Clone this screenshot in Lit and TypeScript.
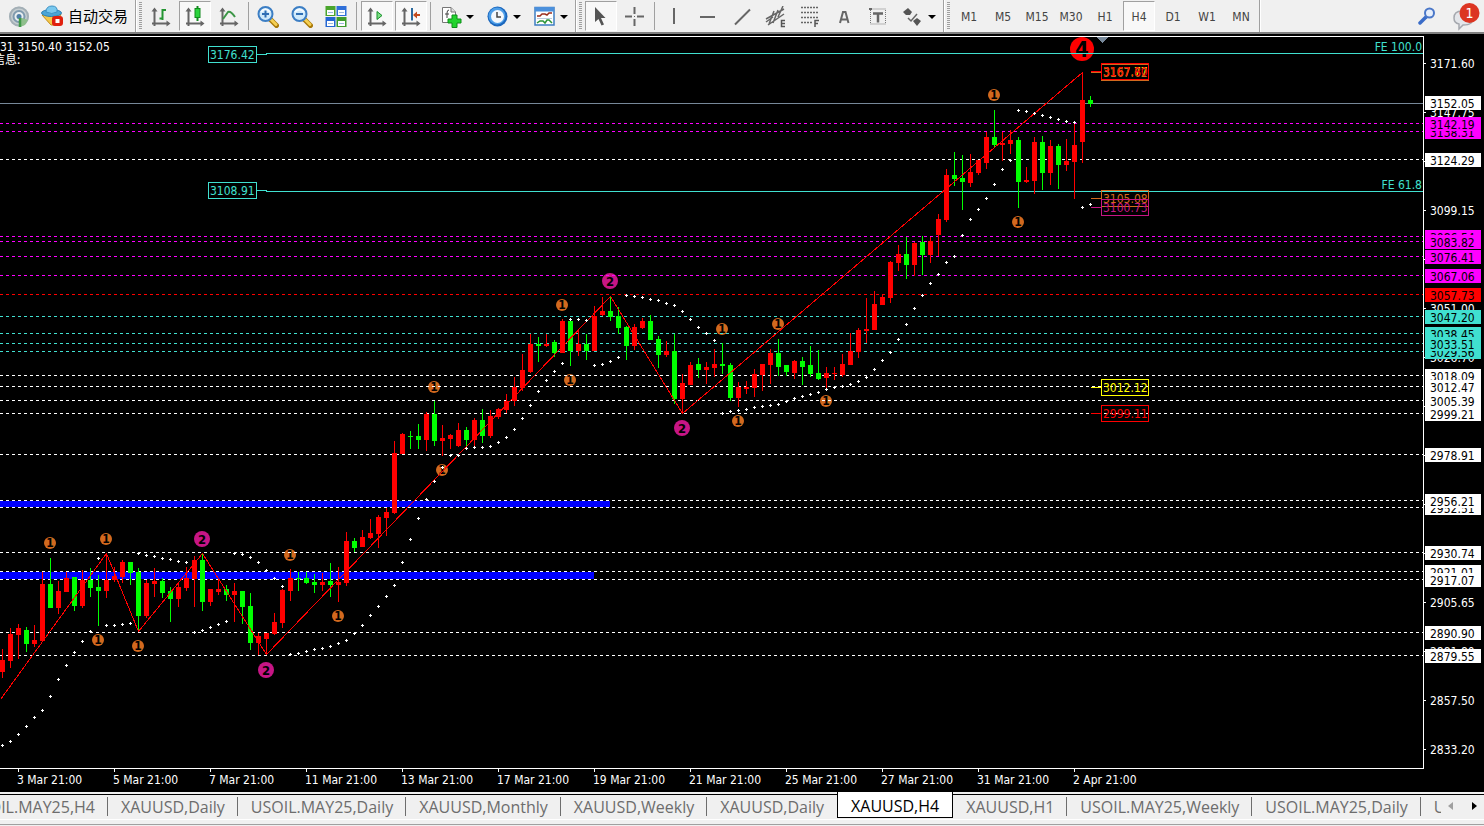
import { LitElement, html, svg, css } from "lit";
import { customElement, state } from "lit/decorators.js";

const RED = "#ff0000";
const LIME = "#00ff00";
const WHITE = "#ffffff";
const MAGENTA = "#ff00ff";
const TURQUOISE = "#40e0d0";
const CHOCOLATE = "#d2691e";
const VIOLET = "#c71585";
const SLATE = "#778899";

/** Distance between two bars and the centre of the first one. */
const STEP = 8;
const FIRST = 2;
/** Vertical origin of the plot's coordinates. */
const TOP = 37;

/** high, body top, body bottom, low, 1 = rising */
const BARS: number[][] = [
  [649,660,672,678,1],[628,634,661,668,1],[624,628,635,659,1],[627,630,644,652,0],[625,640,644,647,1],
  [572,584,641,642,1],[558,584,608,608,0],[581,591,608,614,1],[572,578,592,592,1],[577,577,606,611,0],
  [570,580,606,608,1],[568,580,588,597,0],[575,587,591,626,0],[553,580,591,598,1],[567,576,580,582,1],
  [560,562,577,583,1],[562,562,573,585,0],[568,572,616,631,0],[580,583,616,618,1],[568,581,584,597,1],
  [578,581,593,598,0],[587,591,599,622,0],[584,587,599,607,1],[567,578,588,591,1],[556,560,579,607,1],
  [553,560,602,611,0],[589,589,602,606,1],[579,589,592,595,1],[585,589,595,601,0],[583,591,595,622,1],
  [591,591,607,624,0],[593,606,643,650,0],[633,636,643,655,1],[633,633,639,655,1],[613,622,634,635,1],
  [589,590,623,628,1],[569,578,591,601,1],[572,578,579,591,0],[572,578,583,584,0],[574,582,585,593,0],
  [573,582,585,591,1],[563,581,585,597,0],[567,582,585,602,1],[532,541,583,586,1],[538,541,548,552,0],
  [530,537,547,547,1],[519,533,538,539,1],[515,517,534,548,1],[508,512,518,536,1],[441,453,513,514,1],
  [433,434,454,454,1],[431,436,437,449,0],[424,436,440,449,0],[412,414,440,451,1],[401,414,441,446,0],
  [425,438,441,456,1],[434,435,439,449,1],[423,430,446,447,1],[427,430,440,449,0],[418,420,440,446,1],
  [409,420,436,443,0],[410,416,436,438,1],[408,409,417,419,1],[394,401,410,413,1],[377,387,401,406,1],
  [354,370,388,391,1],[334,344,372,373,1],[337,344,346,362,0],[334,344,346,347,1],[340,342,353,357,0],
  [319,321,353,353,1],[320,321,351,366,0],[329,344,351,356,1],[334,344,351,360,0],[306,316,351,351,1],
  [297,311,315,316,1],[296,311,317,321,0],[307,316,328,334,0],[326,327,346,360,0],[324,327,346,350,1],
  [318,321,328,329,1],[315,321,340,340,0],[336,339,355,368,0],[341,351,355,357,1],[334,351,399,404,0],
  [374,383,399,414,1],[362,365,385,385,1],[358,364,370,378,0],[362,367,370,384,1],[349,364,368,377,1],
  [343,364,366,374,0],[363,365,398,401,0],[382,387,398,407,1],[381,387,389,394,1],[369,374,388,397,1],
  [364,364,375,391,1],[349,353,365,384,1],[339,353,367,376,0],[365,365,372,376,0],[360,361,373,379,1],
  [357,361,367,385,0],[346,365,374,377,0],[350,373,379,380,0],[367,373,378,388,1],[367,373,374,380,1],
  [354,364,375,377,1],[333,351,365,365,1],[328,330,352,358,1],[298,329,331,343,1],[291,304,330,330,1],
  [294,297,305,305,1],[261,262,298,303,1],[245,254,263,271,1],[237,254,265,279,0],[242,243,265,276,1],
  [236,242,255,275,0],[237,241,255,263,1],[214,219,235,256,1],[169,175,220,222,1],[152,175,179,186,0],
  [155,178,182,210,0],[154,172,183,187,1],[160,160,173,175,1],[132,137,163,169,1],[110,137,145,147,0],
  [132,143,145,161,1],[130,140,144,154,1],[137,140,182,208,0],[167,180,182,183,1],[137,142,181,194,1],
  [136,142,173,190,0],[140,146,173,185,1],[144,146,165,189,0],[139,161,165,171,1],[123,145,162,199,1],
  [72,100,142,163,1],[96,100,104,107,0],
];

/** Parabolic SAR, one value per bar. */
const SAR = [
  745,741,734,726,717,710,696,679,665,652,641,631,558,625,625,624,623,553,555,556,558,559,561,562,632,630,627,
  624,621,553,554,557,562,570,578,586,654,653,651,649,648,646,643,640,633,625,615,606,596,585,562,539,518,499,
  481,467,455,455,448,447,447,446,442,437,429,418,405,391,380,371,363,319,319,320,365,364,361,357,295,296,297,
  299,300,303,305,311,319,327,333,340,413,411,410,409,407,406,405,404,401,398,396,394,392,389,387,386,384,381,
  377,369,360,352,339,324,308,295,283,274,262,256,235,219,209,198,184,169,160,110,111,113,115,117,119,121,122,
  207,204,
];

const ZIGZAG = "0,699 106,553 138,631 202,553 266,654 610,296 682,413 1082,72";

const LEVELS: [number, string, string][] = [
  [131, "3138.31", MAGENTA], [123, "3142.19", MAGENTA], [159, "3124.29", WHITE],
  [236, "3086.54", MAGENTA], [241, "3083.82", MAGENTA], [256, "3076.41", MAGENTA], [275, "3067.06", MAGENTA],
  [294, "3057.73", RED], [316, "3047.20", TURQUOISE], [333, "3038.45", TURQUOISE],
  [351, "3029.56", TURQUOISE], [343, "3033.51", TURQUOISE],
  [375, "3018.09", WHITE], [386, "3012.47", WHITE], [400, "3005.39", WHITE], [413, "2999.21", WHITE],
  [454, "2978.91", WHITE], [507, "2952.51", WHITE], [500, "2956.21", WHITE], [552, "2930.74", WHITE],
  [571, "2921.01", WHITE], [579, "2917.07", WHITE], [632, "2890.90", WHITE], [655, "2879.55", WHITE],
];

const SCALE: [number, string][] = [
  [63, "3171.60"], [112, "3147.75"], [161, ""], [210, "3099.15"], [259, ""], [308, "3051.00"],
  [357, "3026.70"], [406, ""], [455, ""], [504, ""], [553, ""], [602, "2905.65"], [651, "2881.80"],
  [700, "2857.50"], [749, "2833.20"],
];

const ONES = [
  [50,543],[106,539],[98,640],[138,646],[290,555],[338,616],[434,387],[442,470],[562,305],[570,380],
  [722,329],[738,421],[778,324],[826,401],[994,95],[1018,222],
];
const TWOS = [[202,539],[266,670],[610,281],[682,428]];

const TIMES = [
  "3 Mar 21:00", "5 Mar 21:00", "7 Mar 21:00", "11 Mar 21:00", "13 Mar 21:00", "17 Mar 21:00",
  "19 Mar 21:00", "21 Mar 21:00", "25 Mar 21:00", "27 Mar 21:00", "31 Mar 21:00", "2 Apr 21:00",
];

const TAGS: [number, string, string][] = [
  [71, "3167.77", "#ffff00"], [72, "3167.62", CHOCOLATE], [71, "3167.80", RED],
  [198, "3105.08", CHOCOLATE], [207, "3100.73", VIOLET], [387, "3012.12", "#ffff00"], [413, "2999.11", RED],
];

const TABS = [
  "USOIL.MAY25,H4", "XAUUSD,Daily", "USOIL.MAY25,Daily", "XAUUSD,Monthly", "XAUUSD,Weekly", "XAUUSD,Daily",
  "XAUUSD,H4", "XAUUSD,H1", "USOIL.MAY25,Weekly", "USOIL.MAY25,Daily", "USOIL.MAY25,H1",
];

const FRAMES = ["M1", "M5", "M15", "M30", "H1", "H4", "D1", "W1", "MN"];

const axes = svg`<path d="M4.5 3V20M2 17.500H18.500" fill="none" stroke="#666" stroke-width="2"/>
  <path d="M1.500 5.500L4.500 1.500L7.500 5.500ZM16.500 14.500L20.500 17.500L16.500 20.500Z" fill="#666"/>`;

const lens = (sign: unknown) => svg`
  <path d="M13.500 13.500L19.500 19.500" stroke="#a87808" stroke-width="5" stroke-linecap="round"/>
  <path d="M13.500 13L19 18.500" stroke="#f5cf52" stroke-width="3" stroke-linecap="round"/>
  <circle cx="8.500" cy="8" r="7" fill="#cfeafb" stroke="#3c7ec4" stroke-width="2"/>
  <path d="M4 6Q8 1 13 6" fill="none" stroke="#fff" stroke-width="2" opacity=".8"/>${sign}`;

const ICONS: Record<string, unknown> = {
  signal: svg`<circle cx="11" cy="10.500" r="10" fill="#c5cdd0"/><circle cx="11" cy="10.500" r="9" fill="none" stroke="#a3afb6" stroke-width="2"/>
    <circle cx="11" cy="10.500" r="5.500" fill="#e8edf0" stroke="#7f9aae" stroke-width="2"/>
    <path d="M11 11L12 21L17 19L20 14Z" fill="#8fbf8c"/>
    <circle cx="11" cy="10.500" r="2.500" fill="#4f7fa6"/><path d="M12 12V21" stroke="#3f9a48" stroke-width="2.500"/>`,
  expert: svg`<path d="M1 10L10 20H15L20 9Z" fill="#f4c84a" stroke="#c28d1c"/>
    <ellipse cx="10.500" cy="8" rx="10" ry="3.500" fill="#4aa5d6" stroke="#2b7eb0"/>
    <path d="M5 7Q5 1 11 1T16 7Q11 10 5 7Z" fill="#79c8ee" stroke="#3b91c4"/>
    <rect x="11" y="11" width="11" height="10" rx="3" fill="#e0200e"/><rect x="14.500" y="14" width="4" height="4" fill="#fff"/>`,
  bars: svg`${axes}<path d="M12.500 3V14M12.500 4H16M9.500 12.500H12" stroke="#259533" stroke-width="2" fill="none"/>`,
  candles: svg`${axes}<path d="M13.500 0V15" stroke="#128a1e" stroke-width="2"/><rect x="11" y="2.500" width="5" height="9" fill="#2ad33c" stroke="#128a1e"/>`,
  line: svg`${axes}<path d="M5 13L10 6Q13 5 17 11" fill="none" stroke="#3c9646" stroke-width="2"/>`,
  zoomIn: lens(svg`<path d="M8.500 4.500V11.500M5 8H12" stroke="#2f6eb4" stroke-width="2"/>`),
  zoomOut: lens(svg`<path d="M5 8H12" stroke="#2f6eb4" stroke-width="2"/>`),
  tile: svg`<path d="M0.500 0H10.500V10H0.500Z" fill="#4aa52c"/><path d="M11.500 0H21.500V10H11.500Z" fill="#2f6fd8"/>
    <path d="M0.500 11H10.500V21H0.500Z" fill="#2466d2"/><path d="M11.500 11H21.500V21H11.500Z" fill="#3f9c2c"/>
    <path d="M2 4H9V9H2ZM13 4H20V9H13ZM2 15H9V20H2ZM13 15H20V20H13Z" fill="#fff"/>
    <path d="M3 6.500H8M14 6.500H19M3 17.500H8M14 17.500H19" stroke="#9db8dc"/>`,
  scroll: svg`${axes}<path d="M11 5.500L16 9.500L11 13.500Z" fill="#7be083" stroke="#17902a"/>`,
  shift: svg`${axes}<path d="M12 2V14.500" stroke="#2c6a9e" stroke-width="2"/><path d="M14 9H20" stroke="#c34a1c" stroke-width="2"/><path d="M13 9L17 5.500V12.500Z" fill="#c34a1c"/>`,
  indicator: svg`<path d="M2.500 1.500H11L15.500 6V16.500H2.500Z" fill="#fff" stroke="#777"/><path d="M11 1.500V6H15.500" fill="#ddd" stroke="#777"/>
    <path d="M9 4Q7 4 7 7V12M5 8H9" fill="none" stroke="#444"/>
    <path d="M12 9H17V13H21V17H17V21.500H12V17H8V13H12Z" fill="#22d32e" stroke="#0d8d18"/>`,
  clock: svg`<circle cx="10.500" cy="10.500" r="10" fill="#1b67bd"/><circle cx="10" cy="10" r="8.500" fill="#4d9ee8"/><circle cx="10.500" cy="10.500" r="6.500" fill="#f4f8fc"/>
    <path d="M10 6V11H14" fill="none" stroke="#444" stroke-width="1.500"/>`,
  template: svg`<rect x="1" y="1.500" width="19" height="17.500" fill="#fff" stroke="#3e7dc2" stroke-width="1.500"/><rect x="1" y="1" width="19" height="4.500" fill="#4b90dc"/>
    <path d="M3 10H6L8 8H11L13 9L15 7H18" fill="none" stroke="#9b2d1c" stroke-width="1.500"/><path d="M3 12.500H18" stroke="#bcd"/>
    <path d="M3 17L6 15H9L11 17L13 14L15 14L18 17" fill="none" stroke="#2c9437" stroke-width="1.500"/>`,
  cursor: svg`<path d="M5 1V16L8.500 13L11.500 19.500L14 18.500L11 12H15.500Z" fill="#555"/>`,
  cross: svg`<path d="M10.500 1V8M10.500 13V20M1 10.500H8M13 10.500H20" stroke="#666" stroke-width="2"/><path d="M10 10H11V11H10Z" fill="#666"/>`,
  vertical: svg`<path d="M11 2V18" stroke="#666" stroke-width="2"/>`,
  horizontal: svg`<path d="M3 11H18" stroke="#666" stroke-width="2"/>`,
  trend: svg`<path d="M4 18.500L19 3.500" stroke="#666" stroke-width="2"/>`,
  channel: svg`<path d="M1 13L19 3M3 19L19 8M4 18L9 5M8 17L13 4M13 11L18 0M1 16L8 11" stroke="#666" stroke-width="1.500" fill="none"/>
    <path d="M20 14.500H16.500V20.500H20M16.500 17.500H20" stroke="#555" stroke-width="1.500" fill="none"/>`,
  fibo: svg`<path d="M2 1.500H20M2 6.500H20M2 11.500H20M2 16.500H13" stroke="#666" stroke-width="1.500" stroke-dasharray="2 1"/>
    <path d="M20 14.500H16V21M16 17.500H19" stroke="#555" stroke-width="1.500" fill="none"/>`,
  text: svg`<path d="M7 17L10 6H12.500L15.500 17M8 13.500H15" fill="none" stroke="#666" stroke-width="2"/>`,
  label: svg`<rect x="3.500" y="3" width="15" height="15" fill="none" stroke="#777" stroke-dasharray="1 1"/><path d="M2 2H5V4H2Z" fill="#666"/>
    <path d="M6 7.500H16M11 7.500V16.500" stroke="#666" stroke-width="2.500"/>`,
  arrows: svg`<path d="M6 2L10 6L8 9H4L1 6ZM15 12L19 15L15 20L11 15Z" fill="#555"/><path d="M6 12L9 15L15 8" fill="none" stroke="#666" stroke-width="1.500"/>`,
};

@customElement("app-root")
export class AppRoot extends LitElement {
  @state() private frame = "H4";
  @state() private tab = 6;

  static styles = css`
    :host {
      display: flex;
      flex-direction: column;
      min-height: 100vh;
      background: #000;
      font-family: "DejaVu Sans Condensed", "DejaVu Sans", sans-serif;
      font-size: 12px;
      overflow: hidden;
    }
    * { box-sizing: border-box; }
    button {
      border: 0;
      background: none;
      padding: 0;
      margin: 0;
      font: inherit;
      color: inherit;
    }
    svg { display: block; }

    .toolbar {
      display: flex;
      flex: none;
      height: 34px;
      background: #f0f0f0;
      border-bottom: 2px solid #808080;
      color: #444;
    }
    .group {
      display: flex;
      align-items: center;
      gap: 2px;
      padding: 0 2px;
      border-right: 1px solid #a0a0a0;
      box-shadow: 1px 0 #fff;
      margin-right: 1px;
    }
    .group.lead { padding: 0 3px; }
    .grip {
      width: 3px;
      height: 28px;
      margin-right: 1px;
      background: repeating-linear-gradient(#a0a0a0 0 1px, #f0f0f0 1px 2px);
    }
    .sep {
      width: 3px;
      height: 28px;
      background: linear-gradient(#a0a0a0, #a0a0a0) center / 1px 100% no-repeat;
    }
    .sep.wide { width: 5px; }
    .tool {
      display: flex;
      align-items: center;
      justify-content: center;
      width: 32px;
      height: 30px;
      padding-top: 2px;
    }
    .tool.on {
      border: 1px solid #a0a0a0;
      border-right-color: #fff;
      border-bottom-color: #fff;
      background: #f8f8f8;
    }
    .tool.menu { width: 45px; gap: 4px; }
    .caret {
      border: 4px solid transparent;
      border-top-color: #000;
      border-bottom: 0;
    }
    .auto {
      display: flex;
      align-items: center;
      gap: 5px;
      padding: 0 4px;
      height: 30px;
      color: #000;
      font-family: "Noto Sans CJK SC", sans-serif;
      font-size: 15px;
      line-height: 20px;
    }
    .right {
      display: flex;
      align-items: center;
      gap: 16px;
      margin-left: auto;
      padding-right: 4px;
    }

    .chart {
      flex: 1;
      display: grid;
      grid-template-columns: minmax(0, 1fr) 60px;
      grid-template-rows: minmax(0, 1fr) 23px;
      padding-top: 2px;
      background: #000;
    }
    .plot {
      border: 1px solid #fff;
      border-left: 0;
    }
    .plot, .scale, .times {
      width: 100%;
      height: 100%;
      overflow: hidden;
    }
    .scale, .times { overflow: visible; }
    .scale { padding-top: 1px; }
    .times { grid-column: 1 / -1; }
    .info { font-family: "Noto Sans CJK SC", sans-serif; }
    .crisp { shape-rendering: crispEdges; }
    .mark {
      font-weight: bold;
      text-anchor: middle;
    }
    .m1 { font-size: 12px; }
    .m2 { font-size: 13px; }
    .m4 { font-size: 22px; }
    .end { text-anchor: end; }

    .tabs {
      flex: none;
      display: flex;
      height: 27px;
      background: linear-gradient(#f0f0f0 2px, #000 2px 3px, #f0f0f0 3px);
      font-family: "Open Sans", "Noto Sans", sans-serif;
      font-size: 16px;
      line-height: 22px;
      color: #6d6d6d;
    }
    .strip {
      flex: 1;
      min-width: 0;
      display: flex;
      overflow: hidden;
    }
    .tab {
      flex: none;
      padding: 2px 13px 0;
      white-space: nowrap;
      background: linear-gradient(#6d6d6d, #6d6d6d) right 5px / 1px 19px no-repeat;
    }
    .tab.cut {
      display: flex;
      align-items: center;
      justify-content: flex-end;
      width: 108px;
      overflow: hidden;
    }
    .tab.before { background: none; }
    .tab.active {
      margin-bottom: 1px;
      padding: 3px 13px 0;
      border: 1px solid #000;
      border-top: 0;
      background: #fff;
      color: #000;
    }
    .nav {
      display: flex;
      align-items: center;
      justify-content: space-between;
      width: 43px;
      padding: 0 7px;
    }
    .left, .rightward { border: 4px solid transparent; }
    .left { border-right: 5px solid #a0a0a0; border-left: 0; }
    .rightward { border-left: 5px solid #000; border-right: 0; }
    .status {
      flex: none;
      height: 7px;
      background: linear-gradient(#fff 1px, #f0f0f0 1px 5px, #a0a0a0 5px 6px, #f0f0f0 6px);
    }
  `;

  private icon(name: string) {
    return html`<svg width="22" height="22" viewBox="0 0 22 22" aria-hidden="true">${ICONS[name]}</svg>`;
  }

  private tool(name: string, label: string, on = false) {
    return html`<button class="tool ${on ? "on" : ""}" aria-label=${label}>${this.icon(name)}</button>`;
  }

  private menu(name: string, label: string) {
    return html`<button class="tool menu" aria-label=${label}>${this.icon(name)}<span class="caret"></span></button>`;
  }

  private toolbar() {
    return html`<header class="toolbar">
      <div class="group lead">
        ${this.tool("signal", "信号")}
        <button class="auto">${this.icon("expert")}<span>自动交易</span></button>
      </div>
      <div class="group">
        <span class="grip"></span>
        ${this.tool("bars", "Bar chart")}${this.tool("candles", "Candlesticks", true)}${this.tool("line", "Line chart")}
        <span class="sep"></span>
        ${this.tool("zoomIn", "Zoom in")}${this.tool("zoomOut", "Zoom out")}${this.tool("tile", "Tile windows")}
        <span class="sep wide"></span>
        ${this.tool("scroll", "Auto scroll", true)}${this.tool("shift", "Chart shift", true)}
        <span class="sep"></span>
        ${this.menu("indicator", "Indicators")}${this.menu("clock", "Periods")}${this.menu("template", "Templates")}
      </div>
      <div class="group">
        <span class="grip"></span>
        ${this.tool("cursor", "Cursor", true)}${this.tool("cross", "Crosshair")}
        <span class="sep"></span>
        ${this.tool("vertical", "Vertical line")}${this.tool("horizontal", "Horizontal line")}
        ${this.tool("trend", "Trendline")}${this.tool("channel", "Channel")}${this.tool("fibo", "Fibonacci")}
        ${this.tool("text", "Text")}${this.tool("label", "Text label")}${this.menu("arrows", "Arrows")}
      </div>
      <div class="group">
        <span class="grip"></span>
        ${FRAMES.map((f) => html`<button class="tool ${f === this.frame ? "on" : ""}" @click=${() => (this.frame = f)}>${f}</button>`)}
      </div>
      <div class="right">
        <button aria-label="Search">
          <svg width="18" height="18" viewBox="0 0 18 18">
            <path d="M2 16L8 10" stroke="#3a6cc8" stroke-width="3.500" stroke-linecap="round" />
            <circle cx="11.500" cy="6" r="4.500" fill="#e6eefb" stroke="#4a77c8" stroke-width="2" />
          </svg>
        </button>
        <button aria-label="Messages">
          <svg width="28" height="30" viewBox="0 0 28 30">
            <path d="M2 17Q2 10 10 10T20 17T11 24L7 28V23Q2 22 2 17Z" fill="#e4e6ea" stroke="#a5a8ae" stroke-width="1.500" />
            <circle cx="17.500" cy="12" r="10" fill="#dc3522" />
            <text x="17.500" y="17" text-anchor="middle" fill="#fff" font-size="14">1</text>
          </svg>
        </button>
      </div>
    </header>`;
  }

  private mark(x: number, y: number, digit: number, r: number, fill: string) {
    return svg`<circle cx=${x} cy=${y} r=${r} fill=${fill}></circle>
      <text class="mark m${digit}" x=${x} y=${y + (digit === 4 ? 8 : 3 + digit)}>${digit}</text>`;
  }

  private plot() {
    return html`<svg class="plot" role="img" aria-label="XAUUSD,H4">
      <g transform="translate(0 ${-TOP})">
        ${ONES.map(([x, y]) => this.mark(x, y, 1, 6, CHOCOLATE))}
        ${TWOS.map(([x, y]) => this.mark(x, y, 2, 8, VIOLET))}
        ${this.mark(1082, 49, 4, 12, RED)}
        <g class="crisp">
          <rect x="0" y="501" width="610" height="6" fill="#0000ff" />
          <rect x="0" y="572" width="594" height="7" fill="#0000ff" />
          ${LEVELS.map(([y, , c]) => svg`<line x1="0" x2="100%" y1=${y + 0.5} y2=${y + 0.5} stroke=${c} stroke-dasharray="3 3"></line>`)}
          <line x1="0" x2="100%" y1="103.5" y2="103.5" stroke=${SLATE} />
          ${[53, 191].map((y) => svg`<line x1="266" x2="100%" y1=${y + 0.5} y2=${y + 0.5} stroke=${TURQUOISE}></line>`)}
          ${BARS.map(([h, t, b, l, up], i) => {
            const x = FIRST + i * STEP;
            const c = up ? RED : LIME;
            return svg`<rect x=${x} y=${h} width="1" height=${l - h} fill=${c}></rect>
              <rect x=${x - 2} y=${t} width="5" height=${b - t} fill=${c}></rect>`;
          })}
          <polyline points=${ZIGZAG} fill="none" stroke=${RED} transform="translate(.5 .5)" />
          ${SAR.map((y, i) => {
            const x = FIRST + i * STEP;
            return svg`<path d="M${x - 1} ${y + 0.5}h3M${x + 0.5} ${y - 1}v3" stroke="#fff"></path>`;
          })}
          <path d="M1097 37H1108L1102.500 43Z" fill=${SLATE} />
        </g>
        ${([[54, "3176.42"], [190, "3108.91"]] as [number, string][]).map(([y, t]) => svg`
          <rect class="crisp" x="208.5" y=${y - 7.5} width="48" height="16" fill="none" stroke=${TURQUOISE}></rect>
          <path class="crisp" d="M257 ${y + 0.5}H267" stroke=${TURQUOISE}></path>
          <text x="210" y=${y + 5} fill=${TURQUOISE}>${t}</text>`)}
        ${TAGS.map(([y, t, c]) => svg`
          <rect class="crisp" x="1101.5" y=${y - 7.5} width="47" height="16" fill="none" stroke=${c}></rect>
          <path class="crisp" d="M1091 ${y + 0.5}H1101" stroke=${c}></path>
          <text x="1103" y=${y + 5} fill=${c}>${t}</text>`)}
        <text class="end" x="100%" y="51" dx="-1" fill=${TURQUOISE}>FE 100.0</text>
        <text class="end" x="100%" y="189" dx="-1" fill=${TURQUOISE}>FE 61.8</text>
        <text x="0" y="51" fill="#fff">31 3150.40 3152.05</text>
        <text class="info" x="-7" y="64" fill="#fff">信息:</text>
      </g>
    </svg>`;
  }

  private priceTag(y: number, label: string, fill: string, shift: number) {
    return svg`<rect class="crisp" x="1" y=${y - 7 + shift} width="56" height="14" fill=${fill}></rect>
      <text x="6" y=${y + 5 + shift}>${label}</text>`;
  }

  private scale() {
    return html`<svg class="scale">
      <g transform="translate(0 ${-TOP})">
        ${SCALE.map(([y, t]) => svg`<rect class="crisp" x="0" y=${y} width="2" height="1" fill="#fff"></rect>
          ${t ? svg`<text x="6" y=${y + 5} fill="#fff">${t}</text>` : ""}`)}
        ${LEVELS.map(([y, t, c]) => this.priceTag(y, t, c, 1))}
        ${this.priceTag(103, "3152.05", WHITE, 0)}
      </g>
    </svg>`;
  }

  private times() {
    return html`<svg class="times">
      ${TIMES.map((t, i) => svg`<rect x=${18 + i * 96} y="0" width="1" height="3" fill="#fff"></rect>
        <text x=${17 + i * 96} y="15" fill="#fff">${t}</text>`)}
    </svg>`;
  }

  render() {
    return html`${this.toolbar()}
      <main class="chart">${this.plot()}${this.scale()}${this.times()}</main>
      <nav class="tabs">
        <div class="strip">
          ${TABS.map((t, i) => html`<button
            class="tab ${i === 0 ? "cut" : ""} ${i === this.tab ? "active" : ""} ${i === this.tab - 1 ? "before" : ""}"
            @click=${() => (this.tab = i)}>${t}</button>`)}
        </div>
        <div class="nav">
          <button class="left" aria-label="Previous tab"></button>
          <button class="rightward" aria-label="Next tab"></button>
        </div>
      </nav>
      <footer class="status"></footer>`;
  }
}
